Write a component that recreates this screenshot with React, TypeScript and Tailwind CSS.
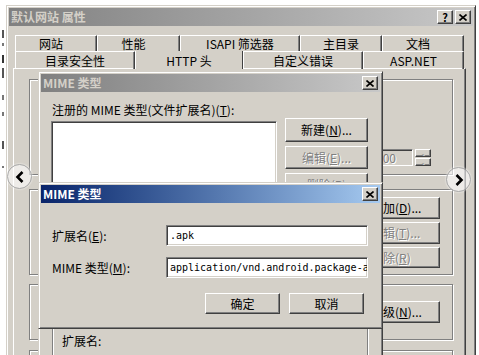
import type { ReactNode } from "react";

// classic Win2000 bevels
const win =
  "border border-t-[#d4d0c8] border-l-[#d4d0c8] border-r-[#404040] border-b-[#404040] shadow-[inset_1px_1px_0_#fff,inset_-1px_-1px_0_#808080] bg-[#d4d0c8]";
const raised =
  "border border-t-white border-l-white border-r-[#404040] border-b-[#404040] shadow-[inset_-1px_-1px_0_#808080] bg-[#d4d0c8]";
const sunken =
  "border border-t-[#808080] border-l-[#808080] border-r-white border-b-white shadow-[inset_1px_1px_0_#404040,inset_-1px_-1px_0_#d4d0c8]";
const etched = "border border-[#808080] shadow-[inset_1px_1px_0_#fff,1px_1px_0_#fff]";
const dim = "text-[#808080] [text-shadow:1px_1px_0_#fff]";

function Btn({
  children,
  disabled,
  className = "",
}: {
  children: ReactNode;
  disabled?: boolean;
  className?: string;
}) {
  return (
    <div className={`flex shrink-0 items-center ${raised} ${disabled ? dim : ""} ${className}`}>
      {children}
    </div>
  );
}

function TitleBar({ title, active, help }: { title: string; active?: boolean; help?: boolean }) {
  return (
    <div
      className={`flex h-[18px] shrink-0 items-center justify-between pl-[2px] pr-[2px] ${
        active
          ? "bg-linear-to-r from-[#0a246a] to-[#a6caf0] text-white"
          : "bg-linear-to-r from-[#808080] to-[#c8c8c8] text-[#d4d0c8]"
      }`}
    >
      <span className="font-bold">{title}</span>
      <div className="flex gap-[2px]">
        {help && (
          <div className={`flex h-[14px] w-[16px] items-center justify-center text-[11px] font-bold text-black ${raised}`}>
            ?
          </div>
        )}
        <div className={`flex h-[14px] w-[16px] items-center justify-center ${raised}`}>
          <svg width="8" height="7" viewBox="0 0 8 7">
            <path d="M0.5 0.5 L7.5 6.5 M7.5 0.5 L0.5 6.5" stroke="#000" strokeWidth="1.6" />
          </svg>
        </div>
      </div>
    </div>
  );
}

function Tab({ label, w, active }: { label: string; w: string; active?: boolean }) {
  return (
    <div
      className={`flex h-full items-center justify-center pt-[1px] leading-[12px] ${w} ${
        active
          ? "relative z-10 border-l border-l-white border-r border-r-[#404040] bg-[#d4d0c8]"
          : "border-t border-l border-t-white border-l-white border-r border-r-[#404040] shadow-[inset_-1px_0_0_#808080]"
      }`}
    >
      {label}
    </div>
  );
}

function Arrow({ left }: { left?: boolean }) {
  return (
    <div className="flex h-[25px] w-[25px] items-center justify-center rounded-full border border-[#a8a8a8] bg-white/60 shadow-[0_0_2px_#fff]">
      <svg width="12" height="14" viewBox="0 0 12 14">
        <path
          d={left ? "M8.5 2 L3.5 7 L8.5 12" : "M3.5 2 L8.5 7 L3.5 12"}
          fill="none"
          stroke="#000"
          strokeWidth="2.6"
        />
      </svg>
    </div>
  );
}

export default function App() {
  return (
    <div className="relative h-[355px] w-[479px] overflow-hidden bg-white font-['Noto_Sans_CJK_SC','Noto_Sans',sans-serif] text-[12px] leading-[14px] text-black">
      {/* bits of the page behind */}
      <div className="absolute left-[2px] top-[30px] h-[8px] w-[2px] bg-[#555]" />
      <div className="absolute left-[2px] top-[43px] h-[3px] w-[2px] bg-[#777]" />
      <div className="absolute left-[2px] top-[55px] h-[8px] w-[2px] bg-[#333]" />
      <div className="absolute left-[2px] top-[68px] h-[10px] w-[2px] bg-[#555]" />
      <div className="absolute left-[2px] top-[95px] h-[5px] w-[2px] bg-[#777]" />
      <div className="absolute left-[2px] top-[112px] h-[4px] w-[2px] bg-[#777]" />
      <div className="absolute left-[2px] top-[141px] h-[8px] w-[2px] bg-[#555]" />
      <div className="absolute left-[2px] top-[166px] h-[2px] w-[2px] bg-[#777]" />

      {/* property sheet */}
      <div className={`absolute left-[6px] top-[5px] flex h-[420px] w-[470px] flex-col p-[2px] ${win}`}>
        <TitleBar title="默认网站 属性" help />

        <div className="ml-[6px] mt-[9px] flex h-[16px] w-[449px] shrink-0">
          <Tab label="网站" w="w-[82px] pr-[10px]" />
          <Tab label="性能" w="w-[83px] pr-[10px]" />
          <Tab label="ISAPI 筛选器" w="w-[120px]" />
          <Tab label="主目录" w="w-[82px]" />
          <Tab label="文档" w="w-[82px] pr-[10px]" />
        </div>
        <div className="relative z-10 ml-[6px] flex h-[18px] w-[449px] shrink-0">
          <Tab label="目录安全性" w="w-[120px]" />
          <Tab label="HTTP 头" w="w-[108px]" active />
          <Tab label="自定义错误" w="w-[120px]" />
          <Tab label="ASP.NET" w="w-[101px]" />
        </div>

        {/* tab page */}
        <div className="-mt-[1px] ml-[4px] flex w-[453px] flex-1 flex-col border border-t-white border-l-white border-r-[#404040] border-b-[#404040] pl-[15px] pt-[10px] shadow-[inset_-1px_-1px_0_#808080]">
          <div className={`flex h-[96px] w-[424px] shrink-0 items-end justify-end pb-[8px] pr-[21px] ${etched}`}>
            <div className={`flex h-[17px] w-[42px] items-center bg-[#d4d0c8] pl-[4px] ${sunken} ${dim}`}>900</div>
            <div className="ml-[2px] flex h-[17px] w-[16px] flex-col">
              <div className={`flex h-[8px] items-center justify-center text-[7px] leading-none ${raised} ${dim}`}>-</div>
              <div className={`mt-[1px] flex h-[8px] items-center justify-center text-[7px] leading-none ${raised} ${dim}`}>-</div>
            </div>
          </div>
          <div className={`mt-[14px] flex h-[86px] w-[424px] shrink-0 flex-col items-end gap-[3px] pr-[12px] pt-[7px] ${etched}`}>
            <Btn className="h-[22px] w-[75px] pl-[5px]">
              添加(<u>D</u>)...
            </Btn>
            <Btn className="h-[22px] w-[75px] pl-[5px]" disabled>
              编辑(<u>T</u>)...
            </Btn>
            <Btn className="h-[21px] w-[75px] pl-[5px]" disabled>
              删除(<u>R</u>)
            </Btn>
          </div>
          <div className={`mt-[9px] flex h-[56px] w-[424px] shrink-0 flex-col items-end pr-[12px] pt-[16px] ${etched}`}>
            <Btn className="h-[22px] w-[75px] pl-[5px]">
              高级(<u>N</u>)...
            </Btn>
          </div>
          <div className={`mt-[10px] h-[40px] w-[424px] shrink-0 ${etched}`} />
        </div>
      </div>

      {/* nav arrows */}
      <div className="absolute left-[7px] top-[164px] z-30">
        <Arrow left />
      </div>
      <div className="absolute left-[446px] top-[167px] z-30">
        <Arrow />
      </div>

      {/* MIME list dialog (inactive) */}
      <div className={`absolute left-[38px] top-[71px] z-10 flex h-[300px] w-[345px] flex-col p-[2px] ${win}`}>
        <TitleBar title="MIME 类型" />
        <div className="ml-[11px] mt-[11px]">
          注册的 MIME 类型(文件扩展名)(<u>T</u>):
        </div>
        <div className="mt-[4px] flex items-start">
          <div className={`ml-[10px] h-[190px] w-[226px] bg-white ${sunken}`} />
          <div className="-mt-[3px] ml-[8px] flex flex-col gap-[4px]">
            <Btn className="h-[24px] w-[83px] justify-center">
              新建(<u>N</u>)...
            </Btn>
            <Btn className="h-[23px] w-[83px] justify-center" disabled>
              编辑(<u>E</u>)...
            </Btn>
            <Btn className="h-[23px] w-[83px] justify-center" disabled>
              删除(<u>R</u>)
            </Btn>
          </div>
        </div>
        <div className={`ml-[11px] mt-[7px] h-[60px] w-[316px] shrink-0 pl-[9px] pt-[15px] ${etched}`}>扩展名:</div>
      </div>

      {/* MIME type edit dialog (active) */}
      <div className={`absolute left-[38px] top-[182px] z-20 flex h-[147px] w-[345px] flex-col p-[2px] ${win}`}>
        <TitleBar title="MIME 类型" active />
        <div className="mt-[22px] flex items-center">
          <div className="w-[125px] pl-[11px]">
            扩展名(<u>E</u>):
          </div>
          <div
            className={`flex h-[21px] w-[202px] items-center overflow-hidden whitespace-nowrap bg-white pl-[3px] font-['DejaVu_Sans_Mono',monospace] text-[10px] ${sunken}`}
          >
            .apk
          </div>
        </div>
        <div className="mt-[11px] flex items-center">
          <div className="w-[125px] pl-[11px]">
            MIME 类型(<u>M</u>):
          </div>
          <div
            className={`flex h-[21px] w-[202px] items-center overflow-hidden whitespace-nowrap bg-white pl-[3px] font-['DejaVu_Sans_Mono',monospace] text-[10px] ${sunken}`}
          >
            application/vnd.android.package-a
          </div>
        </div>
        <div className="mt-[15px] flex justify-end gap-[9px] pr-[16px]">
          <Btn className="h-[21px] w-[75px] justify-center">确定</Btn>
          <Btn className="h-[21px] w-[75px] justify-center">取消</Btn>
        </div>
      </div>
    </div>
  );
}
